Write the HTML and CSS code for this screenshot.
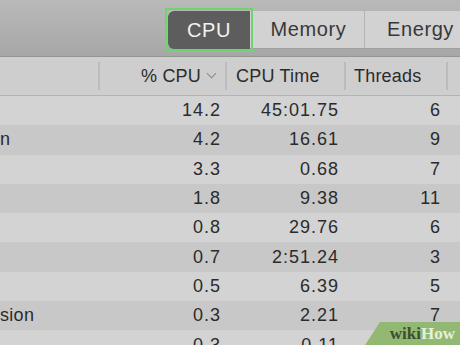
FILE: index.html
```html
<!DOCTYPE html>
<html lang="en">
<head>
    <meta charset="UTF-8">
    <title>Activity Monitor</title>
    <link rel="stylesheet" href="styles.css">
</head>
<body>

<div class="toolbar">
    <div class="tabs">
        <div class="tab-focus">
            <div class="tab active">CPU</div>
        </div>
        <div class="tab">Memory</div>
        <div class="tab">Energy</div>
    </div>
</div>

<div class="head">
    <div class="col name"></div>
    <div class="col cpu">% CPU <span class="chev"></span></div>
    <div class="col time">CPU Time</div>
    <div class="col threads">Threads</div>
    <div class="col rest"></div>
</div>

<div class="rows">
    <div class="row"><div class="name"></div><div class="cpu">14.2</div><div class="time">45:01.75</div><div class="threads">6</div></div>
    <div class="row"><div class="name">n</div><div class="cpu">4.2</div><div class="time">16.61</div><div class="threads">9</div></div>
    <div class="row"><div class="name"></div><div class="cpu">3.3</div><div class="time">0.68</div><div class="threads">7</div></div>
    <div class="row"><div class="name"></div><div class="cpu">1.8</div><div class="time">9.38</div><div class="threads">11</div></div>
    <div class="row"><div class="name"></div><div class="cpu">0.8</div><div class="time">29.76</div><div class="threads">6</div></div>
    <div class="row"><div class="name"></div><div class="cpu">0.7</div><div class="time">2:51.24</div><div class="threads">3</div></div>
    <div class="row"><div class="name"></div><div class="cpu">0.5</div><div class="time">6.39</div><div class="threads">5</div></div>
    <div class="row"><div class="name">sion</div><div class="cpu">0.3</div><div class="time">2.21</div><div class="threads">7</div></div>
    <div class="row"><div class="name"></div><div class="cpu">0.3</div><div class="time">0.11</div><div class="threads">4</div></div>
</div>

<div class="badge"><span class="wiki">wiki</span><span class="how">How</span></div>

</body>
</html>
```

FILE: styles.css
```css
body {
    margin: 0;
    width: 460px;
    height: 345px;
    overflow: hidden;
    background-color: #cfcfcf;
    color: #2b2b2b;
    font-family: "Liberation Sans", Arial, sans-serif;
    position: relative;
}

.toolbar {
    height: 57px;
    background: linear-gradient(#b9b9b9, #a7a7a7);
    border-bottom: 1px solid #959595;
    box-sizing: border-box;
    padding: 11px 0 0 168px;
}

.tabs {
    display: flex;
    height: 38px;
    background-color: #d2d2d2;
    border-bottom: 1px solid #a0a0a0;
    box-sizing: border-box;
    border-radius: 5px 0 0 5px;
    width: 330px;
}

.tab {
    font-size: 20px;
    letter-spacing: 0.6px;
    color: #383838;
    display: flex;
    align-items: center;
    justify-content: center;
    flex-shrink: 0;
    height: 37px;
    width: 112px;
    box-sizing: border-box;
    border-right: 1px solid #b5b5b5;
}

.tab-focus {
    margin: -3px 0 -3px -3px;
    padding: 1px;
    border: 2px solid #6fd36f;
    height: 38px;
    flex-shrink: 0;
}

.tab.active {
    width: 82px;
    height: 38px;
    background-color: #5d5d5d;
    color: #f2f2f2;
    border-radius: 6px 0 0 6px;
    border-right: none;
}

.head {
    display: flex;
    height: 39px;
    background-color: #cecece;
    border-bottom: 1px solid #b3b3b3;
    box-sizing: border-box;
    font-size: 18px;
    letter-spacing: 0.2px;
    align-items: center;
}

.col {
    height: 28px;
    display: flex;
    align-items: center;
    border-right: 2px solid #bcbcbc;
    box-sizing: border-box;
}

.head .name { width: 100px; }
.head .cpu { width: 127px; justify-content: flex-end; padding-right: 10px; }
.head .time { width: 119px; padding-left: 9px; }
.head .threads { width: 102px; padding-left: 8px; }
.head .rest { flex: 1; border-right: none; }

.chev {
    display: inline-block;
    width: 6px;
    height: 6px;
    border-right: 1.5px solid #8a8a8a;
    border-bottom: 1.5px solid #8a8a8a;
    transform: rotate(45deg);
    margin: -6px 0 0 7px;
}

.row {
    display: flex;
    height: 29.3px;
    align-items: center;
    font-size: 18px;
    letter-spacing: 1px;
    background-color: #d3d3d3;
}

.row:nth-child(even) {
    background-color: #c8c8c8;
}

.row .name { width: 100px; letter-spacing: 0.3px; }
.row .cpu { width: 121px; text-align: right; }
.row .time { width: 118px; text-align: right; }
.row .threads { width: 102px; text-align: right; }

.badge {
    position: absolute;
    right: 0;
    bottom: 0;
    width: 90px;
    height: 23px;
    background-color: #93b874;
    display: flex;
    align-items: center;
    justify-content: flex-end;
    padding-right: 5px;
    font-family: "Liberation Serif", serif;
    font-weight: bold;
    font-size: 17px;
    clip-path: polygon(15px 0, 100% 0, 100% 100%, 0 100%);
}

.wiki { color: #3d4f2c; }
.how { color: #e6f0dc; }
```
